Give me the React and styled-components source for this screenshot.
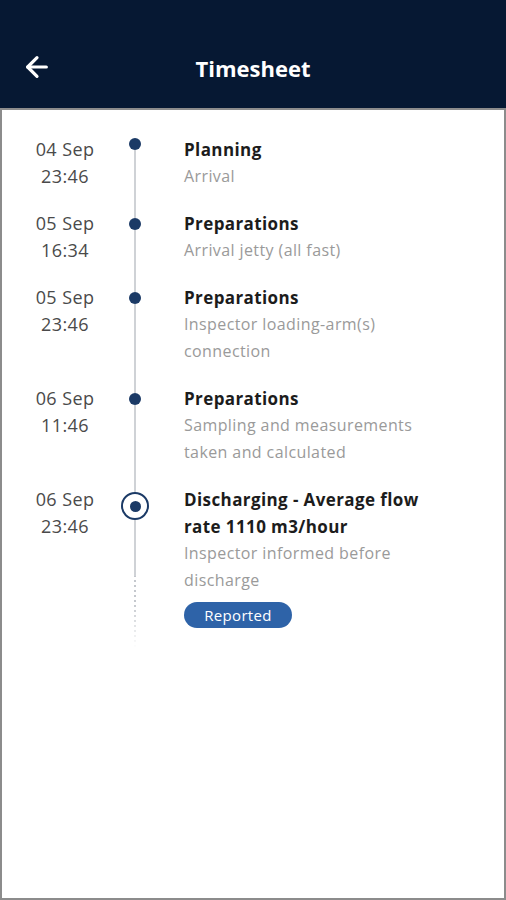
import React from 'react';
import styled, { createGlobalStyle } from 'styled-components';
import { ArrowLeft } from 'lucide-react';

const GlobalStyle = createGlobalStyle`
  html, body {
    margin: 0;
    padding: 0;
    background: #ffffff;
  }
  body {
    font-family: "Open Sans", "Noto Sans", sans-serif;
  }
`;

const Screen = styled.div`
  width: 506px;
  height: 900px;
  display: flex;
  flex-direction: column;
  box-sizing: border-box;
`;

const Header = styled.header`
  height: 108px;
  flex: 0 0 auto;
  background-color: #061833;
  display: flex;
  align-items: center;
  position: relative;
  padding: 26px 0 0 21px;
  box-sizing: border-box;
`;

const BackButton = styled.button`
  background: none;
  border: none;
  padding: 0;
  color: #ffffff;
  display: flex;
  cursor: pointer;
`;

const Title = styled.h1`
  position: absolute;
  left: 0;
  right: 0;
  top: 53px;
  margin: 0;
  text-align: center;
  color: #ffffff;
  font-size: 22px;
  font-weight: 700;
  line-height: 30px;
  pointer-events: none;
`;

const Panel = styled.main`
  flex: 1;
  background: #ffffff;
  border: 2px solid #8c8c8c;
  box-sizing: border-box;
  padding-top: 26px;
`;

const Row = styled.div`
  display: grid;
  grid-template-columns: 126px 14px 1fr;
`;

const DateCol = styled.div`
  text-align: center;
  color: #4a4a4a;
  font-size: 18px;
  letter-spacing: 0.4px;
  line-height: 27px;
`;

const Marker = styled.div`
  display: flex;
  flex-direction: column;
  align-items: center;
`;

const LineTop = styled.div`
  width: 2px;
  height: ${p => p.$h}px;
  background: ${p => (p.$hidden ? 'transparent' : '#cfd2d6')};
  flex: 0 0 auto;
`;

const LineBottom = styled.div`
  width: 2px;
  flex: 1;
  background: ${p =>
    p.$tail
      ? 'linear-gradient(to bottom, #cfd2d6 0, #cfd2d6 56px, transparent 56px), repeating-linear-gradient(to bottom, rgba(190,194,200,0.9) 0 2px, transparent 2px 5px)'
      : '#cfd2d6'};
  ${p => p.$tail && `
    -webkit-mask-image: linear-gradient(to bottom, #000 0, #000 65%, transparent 100%);
    mask-image: linear-gradient(to bottom, #000 0, #000 65%, transparent 100%);
  `}
`;

const Dot = styled.div`
  width: 12px;
  height: 12px;
  border-radius: 50%;
  background: #1b3a66;
  flex: 0 0 auto;
`;

const Ring = styled.div`
  width: 28px;
  height: 28px;
  box-sizing: border-box;
  border-radius: 50%;
  border: 2.5px solid #1b3a66;
  background: #ffffff;
  display: flex;
  align-items: center;
  justify-content: center;
  flex: 0 0 auto;

  &::after {
    content: '';
    width: 11px;
    height: 11px;
    border-radius: 50%;
    background: #1b3a66;
  }
`;

const Body = styled.div`
  padding: 0 0 20px 42px;
  max-width: 264px;
`;

const EventTitle = styled.div`
  color: #1c1c1c;
  font-size: 17px;
  font-weight: 700;
  letter-spacing: 0.4px;
  line-height: 27px;
`;

const EventText = styled.div`
  color: #9a9a9a;
  font-size: 16px;
  letter-spacing: 0.4px;
  line-height: 27px;
`;

const Badge = styled.span`
  display: inline-flex;
  align-items: center;
  justify-content: center;
  margin-top: 8px;
  width: 108px;
  height: 26px;
  border-radius: 13px;
  background: #2e63a8;
  color: #ffffff;
  font-size: 15px;
  letter-spacing: 0.3px;
`;

const events = [
  { day: '04 Sep', time: '23:46', title: 'Planning', text: 'Arrival' },
  { day: '05 Sep', time: '16:34', title: 'Preparations', text: 'Arrival jetty (all fast)' },
  { day: '05 Sep', time: '23:46', title: 'Preparations', text: 'Inspector loading-arm(s) connection' },
  { day: '06 Sep', time: '11:46', title: 'Preparations', text: 'Sampling and measurements taken and calculated' },
  {
    day: '06 Sep',
    time: '23:46',
    title: 'Discharging - Average flow rate 1110 m3/hour',
    text: 'Inspector informed before discharge',
    current: true,
    badge: 'Reported',
  },
];

function TimelineRow({ item, first }) {
  return (
    <Row>
      <DateCol>
        {item.day}
        <br />
        {item.time}
      </DateCol>
      <Marker>
        <LineTop $h={item.current ? 6 : first ? 2 : 8} $hidden={first} />
        {item.current ? <Ring /> : <Dot />}
        <LineBottom $tail={item.current} />
      </Marker>
      <Body>
        <EventTitle>{item.title}</EventTitle>
        <EventText>{item.text}</EventText>
        {item.badge && <Badge>{item.badge}</Badge>}
      </Body>
    </Row>
  );
}

export default function App() {
  return (
    <>
      <GlobalStyle />
      <Screen>
        <Header>
          <BackButton aria-label="Back">
            <ArrowLeft size={32} strokeWidth={2.4} />
          </BackButton>
          <Title>Timesheet</Title>
        </Header>
        <Panel>
          {events.map((e, i) => (
            <TimelineRow key={i} item={e} first={i === 0} />
          ))}
        </Panel>
      </Screen>
    </>
  );
}
